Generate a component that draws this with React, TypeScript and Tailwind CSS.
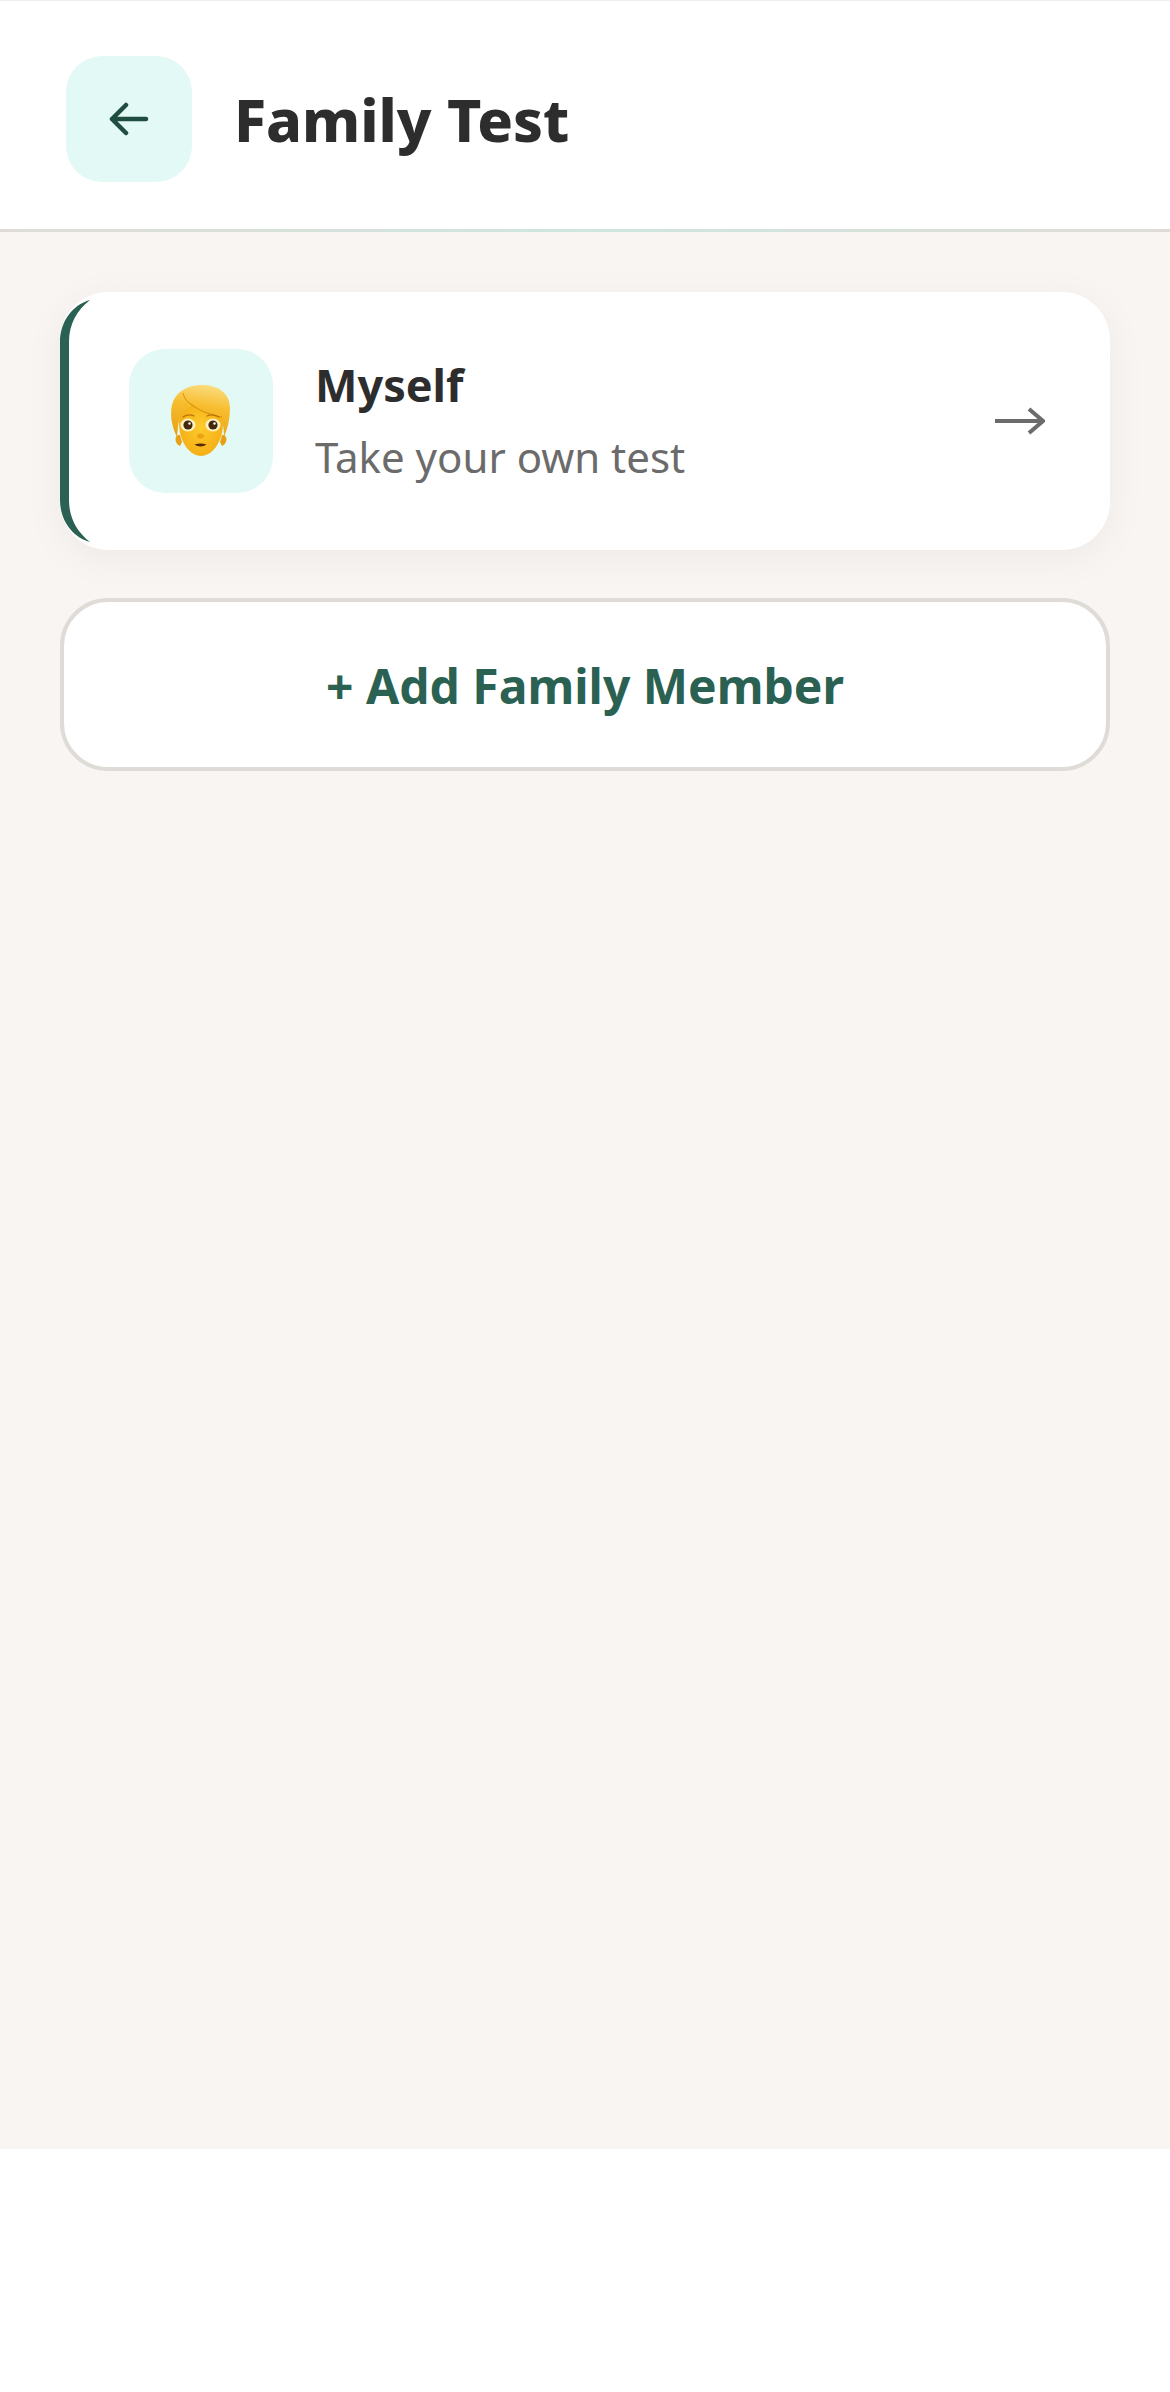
import React from 'react';

const Emoji: React.FC = () => {
    return (
        <svg width="60" height="72" viewBox="0 0 60 72" fill="none">
            <defs>
                <radialGradient id="face" cx="50%" cy="50%" r="60%">
                    <stop offset="0%" stopColor="#fdcb2d" />
                    <stop offset="100%" stopColor="#f4ab12" />
                </radialGradient>
                <linearGradient id="hair" x1="0.6" y1="0" x2="0.4" y2="1">
                    <stop offset="0%" stopColor="#fbdc7e" />
                    <stop offset="40%" stopColor="#f7bd2e" />
                    <stop offset="100%" stopColor="#e8a315" />
                </linearGradient>
            </defs>
            <path d="M7 50c-4 2-3 9 2 11l2-4-2-7zM53 50c4 2 3 9-2 11l-2-4 2-7z" fill="#e8a015" />
            <path d="M8 38c0 19 11 33 22 33s22-14 22-33S44 14 30 14 8 19 8 38z" fill="url(#face)" />
            <path d="M6 52C0 40-1 28 1 20 4 7 16 0 31 0c16 0 28 8 28 23 0 10-2 20-6 29 0-7-1-14-3-20-10-1-21-5-29-13-3 5-8 7-11 11-3 5-3 14-4 22z" fill="url(#hair)" />
            <path d="M12 8c1 5 4 9 9 12 8 6 18 10 30 12" stroke="#dd960e" strokeWidth="1.1" fill="none" />
            <path d="M12 32c3-2 7-3 11-1M36 31c4-2 8-1 12 1" stroke="#b9720a" strokeWidth="1.3" strokeLinecap="round" />
            <ellipse cx="17" cy="40" rx="7.5" ry="6.5" fill="#fff3c4" />
            <ellipse cx="42" cy="40" rx="7.5" ry="6.5" fill="#fff3c4" />
            <circle cx="17" cy="40" r="4.6" fill="#46290a" />
            <circle cx="42" cy="40" r="4.6" fill="#46290a" />
            <circle cx="18.5" cy="38.5" r="1.2" fill="#fff" />
            <circle cx="43.5" cy="38.5" r="1.2" fill="#fff" />
            <ellipse cx="29.5" cy="51" rx="3.5" ry="2.6" fill="#eda214" />
            <path d="M23.5 59.5c4-1.5 8-1.5 12 0-3 2.5-9 2.5-12 0z" fill="#5a2a08" />
        </svg>
    );
};

const App: React.FC = () => {
    return (
        <div className="w-[1170px] h-[2392px] flex flex-col bg-white font-['Noto_Sans','Open_Sans',sans-serif]">
            <div className="h-[229px] shrink-0 flex items-center gap-[42px] px-[66px] pt-[7px] bg-white border-t border-t-[#eeeeee]">
                <div className="w-[126px] h-[126px] flex items-center justify-center rounded-[36px] bg-[#e3f9f6]">
                    <svg width="40" height="34" viewBox="0 0 40 34" fill="none" stroke="#1f4d40" strokeWidth="4.5" strokeLinecap="round" strokeLinejoin="round">
                        <path d="M37 17H3M17 3 3 17l14 14" />
                    </svg>
                </div>
                <div className="text-[59px] leading-[80px] font-extrabold text-[#2d2d2d]">Family Test</div>
            </div>
            <div className="h-[3px] shrink-0 bg-linear-to-r from-[#dfdcd8] via-[#cee6dd] to-[#dfdcd8]"></div>
            <div className="h-[1917px] shrink-0 bg-[#f8f5f2] px-[60px] pt-[60px] flex flex-col gap-[48px]">
                <div className="relative h-[258px] flex items-center pl-[69px] pr-[65px] bg-white rounded-[48px] shadow-[0_8px_40px_rgba(0,0,0,0.05)]">
                    <svg className="absolute left-0 top-0" width="32" height="258" viewBox="0 0 32 258" fill="#2a6152">
                        <path d="M30 8C12 13 0 30 0 50V208C0 228 12 245 30 250 17 240 9 226 9 208V50C9 32 17 18 30 8Z" />
                    </svg>
                    <div className="w-[144px] h-[144px] shrink-0 flex items-center justify-center rounded-[36px] bg-[#e3f9f6]">
                        <Emoji />
                    </div>
                    <div className="flex-1 ml-[42px] flex flex-col gap-[6px] pt-[2px]">
                        <div className="text-[45px] leading-[60px] -mt-[3px] font-bold text-[#2d2d2d]">Myself</div>
                        <div className="text-[42px] leading-[60px] mt-[6px] text-[#6b6b6b]">Take your own test</div>
                    </div>
                    <svg width="50" height="28" viewBox="0 0 50 28" fill="none" stroke="#6b6b6b" strokeWidth="4">
                        <path d="M0 14h47M34 2l14 12-14 12" />
                    </svg>
                </div>
                <div className="h-[173px] flex items-center justify-center pt-[2px] bg-white rounded-[48px] border-4 border-[#dfdcd8] text-[48px] font-bold text-[#2a6152]">
                    + Add Family Member
                </div>
            </div>
        </div>
    );
};

export default App;
